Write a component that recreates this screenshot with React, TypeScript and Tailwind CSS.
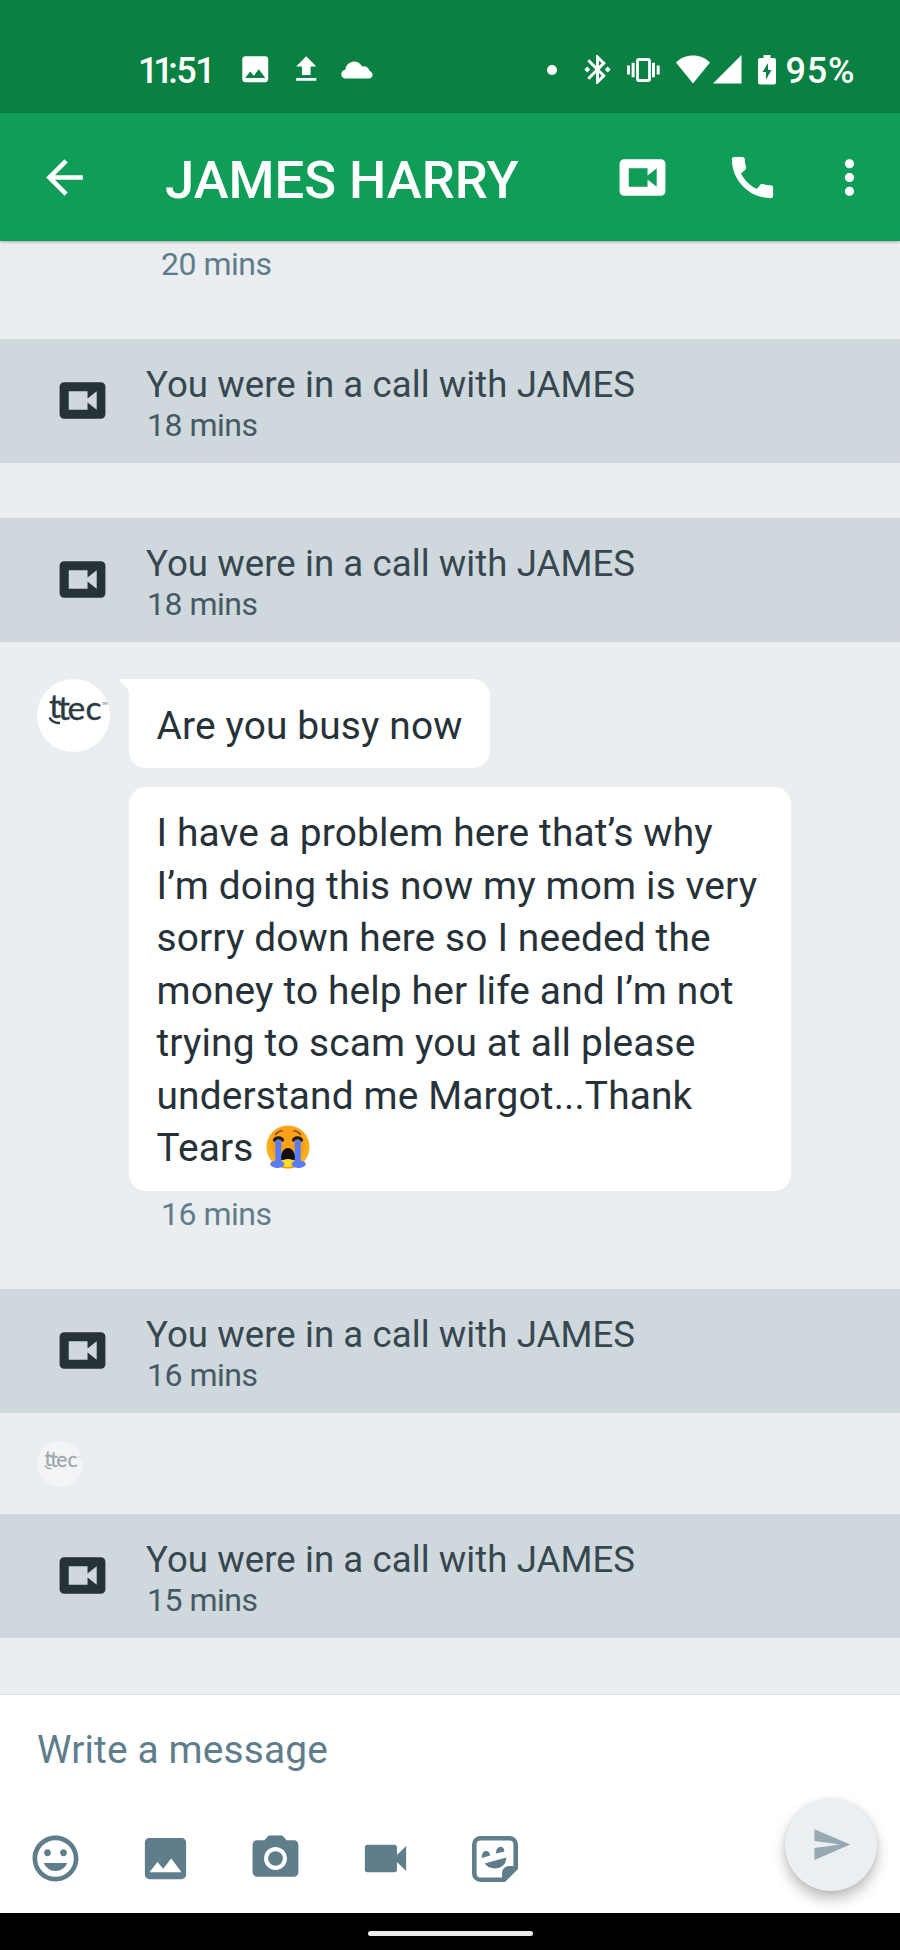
import type { ReactNode } from 'react';
import {
  MdArrowBack,
  MdBluetoothConnected,
  MdCall,
  MdFileUpload,
  MdImage,
  MdInsertEmoticon,
  MdMoreVert,
  MdPhotoCamera,
  MdSend,
  MdVideocam,
} from 'react-icons/md';

// 영상통화 아이콘
function VideoBoxIcon({ className }: { className?: string }) {
  return (
    <svg viewBox="0 0 24 24" className={className} fill="currentColor">
      <path
        fillRule="evenodd"
        d="M4 4h16a2 2 0 0 1 2 2v12a2 2 0 0 1-2 2H4a2 2 0 0 1-2-2V6a2 2 0 0 1 2-2zM6 8v8h8.200v-3.100l4 3.100V8l-4 3.100V8z"
      />
    </svg>
  );
}

// 상태 표시줄 아이콘
function CloudIcon() {
  return (
    <svg viewBox="0 0 32 18" className="h-[18px] w-8" fill="currentColor">
      <path d="M4.600 17.600C2 17.600.3 15.600.3 13.200c0-2.300 1.700-4.300 4.100-4.500C4.700 4 8.600.4 13.200.4c3.600 0 6.500 2 7.900 5 .6-.1 1-.1 1.500-.1 3 0 5.300 2 5.900 4.700 1.800.6 3.100 2.100 3.100 4 0 2.200-1.700 3.600-3.900 3.600z" />
    </svg>
  );
}

function VibrateIcon() {
  return (
    <svg viewBox="0 0 33 24" className="h-6 w-[33px]" fill="currentColor">
      <path d="M0 7.500h3v9H0zM4.600 4.800h3v14.400h-3zM25 4.800h3v14.400h-3zM29.700 7.500h3v9h-3z" />
      <rect x="10.500" y="1.500" width="12" height="21" rx="1.500" fill="none" stroke="currentColor" strokeWidth="2.800" />
    </svg>
  );
}

function WifiIcon() {
  return (
    <svg viewBox="0 0 34 29" className="h-[29px] w-[34px]" fill="currentColor">
      <path d="M17 28.500 0 7.500C4.500 3 10.500.5 17 .5S29.500 3 34 7.500z" />
    </svg>
  );
}

function SignalIcon() {
  return (
    <svg viewBox="0 0 29 29" className="h-[29px] w-[29px]" fill="currentColor">
      <path d="M0 28.500h28.500V0z" />
    </svg>
  );
}

function BatteryIcon() {
  return (
    <svg viewBox="0 0 18 30" className="h-[30px] w-[18px]" fill="currentColor">
      <path
        fillRule="evenodd"
        d="M5.500 0h7v3H16a2 2 0 0 1 2 2v22.500a2 2 0 0 1-2 2H2a2 2 0 0 1-2-2V5a2 2 0 0 1 2-2h3.500zM10 8l-5.500 9H8v7.500L13.500 15H10z"
      />
    </svg>
  );
}

function StickerIcon({ className }: { className?: string }) {
  return (
    <svg viewBox="0 0 46 46" className={className} fill="currentColor">
      <path
        d="M32 43.700H8.500a6.200 6.200 0 0 1-6.200-6.200v-29a6.200 6.200 0 0 1 6.200-6.200h29a6.200 6.200 0 0 1 6.200 6.200V32z"
        fill="none"
        stroke="currentColor"
        strokeWidth="4.600"
      />
      <path d="M30 46V37.500c0-4.600 3.300-7.500 7.500-7.500H46v2L32.500 46z" />
      <path d="M10 22c-.8-3.500 1-6.500 3.500-7s4.500 1 4.700 4.600zM24.200 17.600c-.6-3.400 1.200-6.200 3.600-6.700s4.400 1 4.600 4.500zM12.500 27.500 34.300 21.500c.2 5-3.200 9.400-7.800 10.500-5.500 1.200-11-.4-14-4.500z" />
    </svg>
  );
}

function CryingEmoji() {
  return (
    <svg viewBox="0 0 44 44" role="img" aria-label="😭" className="ml-[2.500px] inline-block h-11 w-11 align-[-8px]">
      <defs>
        <radialGradient id="face" cx="50%" cy="38%" r="62%">
          <stop offset="0.550" stopColor="#f9a01b" />
          <stop offset="0.850" stopColor="#fbb41f" />
          <stop offset="1" stopColor="#f08c10" />
        </radialGradient>
      </defs>
      <circle cx="22" cy="22" r="21.600" fill="url(#face)" />
      <path d="M9.500 9.500c1.600-2.200 3.800-3.500 6.800-3.900M34.500 9.500c-1.600-2.200-3.800-3.500-6.800-3.900" fill="none" stroke="#7a4a1e" strokeWidth="1.400" strokeLinecap="round" />
      <path d="M14.500 35c0-7 3-12 7.500-12s7.500 5 7.500 12z" fill="#120c0c" />
      <path d="M15 37c2-4 12-4 14 0v3c-3 2.500-11 2.500-14 0z" fill="#fddc26" />
      <path d="M8.500 15c1.500-2.800 6.500-2.800 8 0M27.500 15c1.500-2.800 6.500-2.800 8 0" fill="none" stroke="#22180f" strokeWidth="3.200" strokeLinecap="round" />
      <path d="M9.300 15.500c1.500-1 4.500-1 6 0V36c2 .5 3.200 2 3 4-3 4-11 4-14 0-.5-2.500 1.500-3.500 3.800-3.700 1 0 1.200-.8 1.200-1.800zM34.700 15.500c-1.500-1-4.500-1-6 0V36c-2 .5-3.200 2-3 4 3 4 11 4 14 0 .5-2.500-1.500-3.500-3.800-3.700-1 0-1.200-.8-1.200-1.800z" fill="#5a7bf7" />
    </svg>
  );
}

// 발신자 프로필 (ttec 로고)
function Avatar({ className }: { className?: string }) {
  return (
    <svg viewBox="0 0 73 73" className={className}>
      <circle cx="36.500" cy="36.500" r="36.500" fill="#fff" />
      <g fill="#2b3a42" fontFamily="Lato, sans-serif">
        <text x="12 21 30.500 48.500" y="39 41 41 41" fontSize="33.500" stroke="#2b3a42" strokeWidth="0.400">
          ttec
        </text>
        <text x="65" y="25.500" fontSize="3.500">TM</text>
      </g>
      <path d="M12.500 38.500c2 4 5.500 5.700 10.500 5.400" fill="none" stroke="#2b3a42" strokeWidth="2.400" />
    </svg>
  );
}

function CallRow({ time }: { time: string }) {
  return (
    <div className="flex h-[124px] items-start bg-[#cfd8dc] pl-[55px]">
      <VideoBoxIcon className="mt-[34px] h-[55px] w-[55px] text-[#263238]" />
      <div className="mt-6 ml-9">
        <p className="text-[36.570px] leading-[43px] tracking-[0.080px] text-[#37474f]">You were in a call with JAMES</p>
        <p className="ml-px text-[32px] leading-[38px] tracking-[-0.500px] text-[#455a64]">{time}</p>
      </div>
    </div>
  );
}

function Bubble({ children, first }: { children: ReactNode; first?: boolean }) {
  return (
    <div
      className={`relative rounded-[17px] bg-white pt-[20.500px] pb-4 pl-7 text-[38.860px] leading-[52.500px] tracking-[0.140px] text-[#263238] ${
        first ? 'w-fit rounded-tl-none pr-[27px]' : 'w-[662px]'
      }`}
    >
      {first && (
        <svg viewBox="0 0 10 18" className="absolute top-0 -left-[9px] h-[18px] w-[10px]" fill="#fff">
          <path d="M0 0h10v18H9C9 10 6.500 7 0 3z" />
        </svg>
      )}
      {children}
    </div>
  );
}

const LONG_MESSAGE = [
  'I have a problem here that’s why',
  'I’m doing this now my mom is very',
  'sorry down here so I needed the',
  'money to help her life and I’m not',
  'trying to scam you at all please',
  'understand me Margot...Thank',
];

export default function App() {
  return (
    <div className="flex h-[1950px] w-[900px] flex-col overflow-hidden bg-[#ebeef1] font-[Roboto,sans-serif] whitespace-nowrap">
      {/* 상태 표시줄 */}
      <div className="flex h-[113px] shrink-0 items-center bg-[#0b8043] pt-[26px] text-white">
        <span className="ml-[138px] w-[100px] pt-0.5 text-[36px] leading-[42px] font-medium">
          <span className="tracking-[-5.300px]">11</span>
          <span className="tracking-[-1.500px]">:5</span>1
        </span>
        <MdImage className="h-[34.500px] w-[34.500px]" />
        <MdFileUpload className="ml-4 h-[34.500px] w-[34.500px]" />
        <span className="ml-[18px]"><CloudIcon /></span>
        <span className="ml-[174px] h-2.5 w-2.5 rounded-full bg-white" />
        <MdBluetoothConnected className="ml-[23px] h-[35px] w-[35px]" />
        <span className="ml-3"><VibrateIcon /></span>
        <span className="ml-4"><WifiIcon /></span>
        <span className="ml-[3px]"><SignalIcon /></span>
        <span className="ml-4"><BatteryIcon /></span>
        <span className="ml-[9.500px] pt-0.5 text-[36px] leading-[42px] font-medium tracking-[0.800px]">95%</span>
      </div>

      {/* 대화 상대 헤더 */}
      <header className="z-10 flex h-32 shrink-0 items-center bg-[#0f9d58] pl-[37px] text-white shadow-[0_1px_3px_rgba(0,0,0,0.3)]">
        <MdArrowBack className="h-[55px] w-[55px]" />
        <h1 className="ml-[73px] w-[450px] pt-[5px] text-[52.570px] leading-[62px] font-medium">JAMES HARRY</h1>
        <VideoBoxIcon className="h-[55px] w-[55px]" />
        <MdCall className="ml-[55px] h-[55px] w-[55px]" />
        <MdMoreVert className="ml-[42px] h-[55px] w-[55px]" />
      </header>

      {/* 대화 내용 */}
      <main className="h-[1453px] shrink-0 pt-1">
        <p className="mb-14 ml-[161px] text-[32px] leading-[38px] tracking-[-0.500px] text-[#607d8b]">20 mins</p>
        <CallRow time="18 mins" />
        <div className="h-[55px]" />
        <CallRow time="18 mins" />

        <div className="mt-[37px] flex items-start pl-[37px]">
          <Avatar className="h-[73px] w-[73px]" />
          <div className="ml-[18.500px] flex flex-col gap-[18.500px]">
            <Bubble first>Are you busy now</Bubble>
            <Bubble>
              {LONG_MESSAGE.map((line) => (
                <p key={line}>{line}</p>
              ))}
              <p className="h-[52.500px]">Tears <CryingEmoji /></p>
            </Bubble>
          </div>
        </div>
        <p className="mt-1 mb-14 ml-[161px] text-[32px] leading-[38px] tracking-[-0.500px] text-[#607d8b]">16 mins</p>

        <CallRow time="16 mins" />
        <div className="flex h-[101px] items-start pt-7 pl-[37px]">
          <Avatar className="h-[46px] w-[46px] opacity-40" />
        </div>
        <CallRow time="15 mins" />
      </main>

      {/* 메시지 입력 */}
      <footer className="relative h-[219px] shrink-0 border-t border-[#e0e0e0] bg-white pt-[29px] pl-[37px] text-[#607d8b]">
        <p className="text-[38.860px] leading-[52px] tracking-[0.140px]">Write a message</p>
        <div className="mt-[55px] -ml-[9px] flex items-center gap-[55px]">
          <MdInsertEmoticon className="h-[55px] w-[55px]" />
          <MdImage className="h-[55px] w-[55px]" />
          <MdPhotoCamera className="h-[55px] w-[55px]" />
          <MdVideocam className="h-[55px] w-[55px]" />
          <StickerIcon className="ml-1 h-[46px] w-[46px]" />
        </div>
        <button className="absolute top-[103.500px] left-[785px] flex h-[92px] w-[92px] items-center justify-center rounded-full bg-[#eceff1] text-[#97aab3] shadow-[0_8px_14px_rgba(0,0,0,0.25),0_0_4px_rgba(0,0,0,0.1)]">
          <MdSend className="h-[41px] w-[41px]" />
        </button>
      </footer>

      {/* 내비게이션 바 */}
      <div className="flex h-[37px] shrink-0 justify-center bg-black pt-[18px]">
        <div className="h-[5px] w-[165px] rounded-full bg-[#ececec]" />
      </div>
    </div>
  );
}
